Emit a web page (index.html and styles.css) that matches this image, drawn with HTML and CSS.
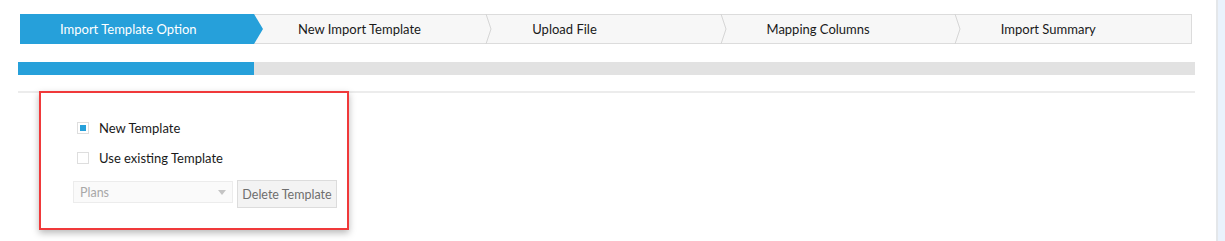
FILE: index.html
```html
<!DOCTYPE html>
<html lang="en">
<head>
<meta charset="utf-8">
<title>Import Wizard</title>
<link rel="stylesheet" href="styles.css">
</head>
<body>
<div class="page">
  <main class="main">
    <nav class="wizard">
      <div class="step active"><span>Import Template Option</span></div>
      <div class="step"><span>New Import Template</span><svg class="chev" width="8" height="30" viewBox="0 0 8 30"><polyline points="1,0 6,15 1,30" fill="none" stroke="#d6d6d6" stroke-width="1"/></svg></div>
      <div class="step"><span>Upload File</span><svg class="chev" width="8" height="30" viewBox="0 0 8 30"><polyline points="1,0 6,15 1,30" fill="none" stroke="#d6d6d6" stroke-width="1"/></svg></div>
      <div class="step"><span>Mapping Columns</span><svg class="chev" width="8" height="30" viewBox="0 0 8 30"><polyline points="1,0 6,15 1,30" fill="none" stroke="#d6d6d6" stroke-width="1"/></svg></div>
      <div class="step last"><span>Import Summary</span></div>
    </nav>
    <div class="progress"><div class="progress-fill" style="width: 236px"></div></div>
    <div class="divider"></div>
    <section class="panel">
      <label class="option"><span class="box checked"></span><span>New Template</span></label>
      <label class="option"><span class="box"></span><span>Use existing Template</span></label>
      <div class="controls">
        <div class="select"><span>Plans</span><span class="caret"></span></div>
        <button class="btn" type="button">Delete Template</button>
      </div>
    </section>
  </main>
  <aside class="side"></aside>
</div>
</body>
</html>
```

FILE: styles.css
```css
* { box-sizing: border-box; }
html, body { margin: 0; padding: 0; background: #fff; }
body {
  font-family: "Lato", "Open Sans", sans-serif;
  font-size: 13px;
  color: #222;
  width: 1225px;
  height: 241px;
  overflow: hidden;
}
.page { display: flex; height: 241px; }
.main { width: 1216px; padding: 14px 21px 0 18px; }
.side {
  flex: 1;
  background: #eaf2fc;
  border-left: 2px solid #e4e7ea;
}

.wizard {
  display: flex;
  height: 30px;
  margin: 0 3px 0 2px;
  background: #f7f7f7;
  border: 1px solid #dcdcdc;
  border-left: none;
}
.step {
  position: relative;
  flex: 1 1 0;
  display: flex;
  align-items: center;
  padding-left: 44px;
  color: #1a1a1a;
  white-space: nowrap;
}
.step.active {
  flex: 0 0 243px;
  margin: -1px -9px -1px 0;
  padding-left: 40px;
  background: #26a0da;
  color: #fff;
  z-index: 1;
  clip-path: polygon(0 0, calc(100% - 9px) 0, 100% 50%, calc(100% - 9px) 100%, 0 100%);
}
.step.active + .step { padding-left: 44px; }
.chev {
  position: absolute;
  right: -5px;
  top: -1px;
  z-index: 1;
}

.progress {
  margin-top: 18px;
  height: 13px;
  background: #e2e2e2;
}
.progress-fill { height: 100%; background: #26a0da; }

.divider {
  margin-top: 16px;
  height: 2px;
  background: #ececec;
}

.panel {
  width: 310px;
  height: 139px;
  margin: -2px 0 0 21px;
  position: relative;
  background: #fff;
  border: 2px solid #f0393a;
  box-shadow: 0 3px 7px rgba(0, 0, 0, 0.28);
  padding: 25px 0 0 32px;
  display: flex;
  flex-direction: column;
}
.option {
  display: flex;
  align-items: center;
  height: 20px;
  margin-left: 4px;
  margin-bottom: 10px;
  color: #1a1a1a;
}
.box {
  width: 12px;
  height: 12px;
  border: 1px solid #dedede;
  background: #fff;
  margin-right: 10px;
  display: flex;
  align-items: center;
  justify-content: center;
}
.box.checked::before {
  content: "";
  width: 6px;
  height: 6px;
  background: #26a0da;
}
.controls {
  display: flex;
  align-items: flex-start;
  gap: 4px;
  margin-top: 2px;
}
.select {
  width: 160px;
  height: 22px;
  margin-top: 1px;
  border: 1px solid #ececec;
  background: #fafafa;
  color: #a8a8a8;
  font-size: 12.5px;
  display: flex;
  align-items: center;
  justify-content: space-between;
  padding: 0 6px 0 6px;
}
.caret {
  width: 0;
  height: 0;
  border-left: 4px solid transparent;
  border-right: 4px solid transparent;
  border-top: 5px solid #c4c4c4;
}
.btn {
  width: 100px;
  height: 28px;
  border: 1px solid #dcdcdc;
  background: #f3f3f3;
  color: #6e6e6e;
  font-family: inherit;
  font-size: 12.5px;
  padding: 0;
}
```
